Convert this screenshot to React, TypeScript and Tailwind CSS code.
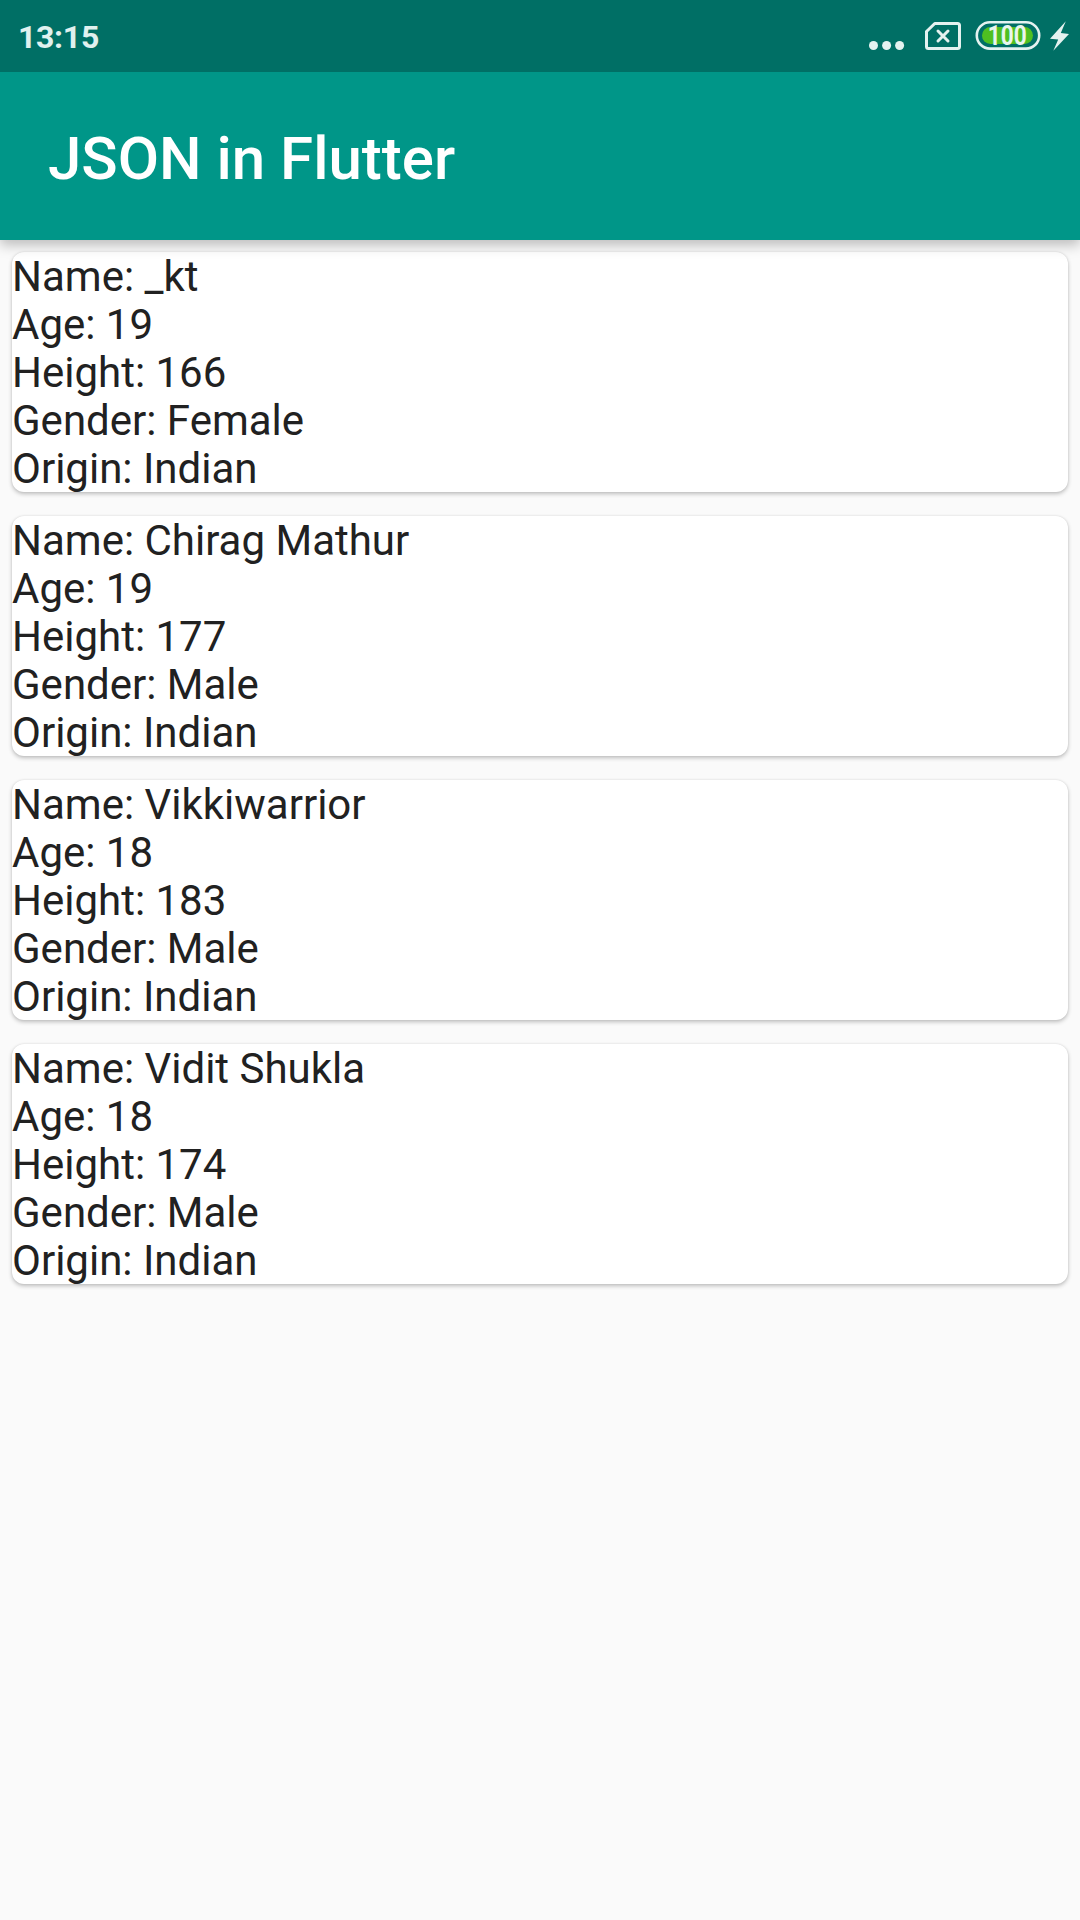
const people = [
  { name: '_kt', age: 19, height: 166, gender: 'Female' },
  { name: 'Chirag Mathur', age: 19, height: 177, gender: 'Male' },
  { name: 'Vikkiwarrior', age: 18, height: 183, gender: 'Male' },
  { name: 'Vidit Shukla', age: 18, height: 174, gender: 'Male' },
];

function StatusIcons() {
  return (
    <div className="flex h-full items-center">
      <svg className="mr-5" width="36" height="72" viewBox="0 0 36 72" fill="#e4f2f0">
        <circle cx="4.5" cy="45.5" r="4.5" />
        <circle cx="17.6" cy="45.5" r="4.5" />
        <circle cx="30.6" cy="45.5" r="4.5" />
      </svg>
      <svg className="mr-3.5" width="36" height="72" viewBox="0 0 36 72" fill="none" stroke="#e4f2f0" strokeWidth="3" strokeLinecap="round" strokeLinejoin="round">
        <path d="M9.8 23.5H32.5Q34.5 23.5 34.5 25.5V46.5Q34.5 48.5 32.5 48.5H3.5Q1.5 48.5 1.5 46.5V31.5Z" />
        <path d="M13 31 23 41M23 31 13 41" />
      </svg>
      <svg className="mr-2" width="66" height="72" viewBox="0 0 66 72" fill="none">
        <rect x="1.8" y="22.2" width="62.4" height="26.4" rx="13.2" stroke="#e4f2f0" strokeWidth="2.6" />
        <rect x="7" y="27" width="51" height="17" rx="8.5" fill="#4fbf21" />
        <text transform="translate(32.2 45) scale(0.84 1)" textAnchor="middle" fill="#e8f5ee" fontFamily="Roboto, sans-serif" fontWeight="700" fontSize="27">100</text>
      </svg>
      <svg width="20" height="72" viewBox="0 0 20 72" fill="#e4f2f0">
        <path d="M16.8 21.2 1 38.7 9.2 39.5 4.3 50.7 20 34 11.8 33Z" />
      </svg>
    </div>
  );
}

export default function App() {
  return (
    <div className="flex h-[1920px] w-[1080px] flex-col overflow-hidden bg-[#fafafa] font-['Roboto',sans-serif]">
      <header className="relative z-10 bg-[#009688] shadow-[0_5px_12px_rgba(0,0,0,0.25)]">
        <div className="flex h-[72px] items-center justify-between bg-[#006f65] pl-[18px] pr-[11px]">
          <span className="pt-0.5 text-[32px] font-bold leading-none tracking-[-0.3px] text-[#e0f1ef]">13:15</span>
          <StatusIcons />
        </div>
        <div className="flex h-[168px] items-center pl-12 pt-1.5">
          <h1 className="text-[60px] font-medium leading-none text-white">JSON in Flutter</h1>
        </div>
      </header>
      <main className="flex flex-col gap-6 px-3 pt-3">
        {people.map((p) => (
          <section key={p.name} className="h-60 rounded-xl bg-white pt-px text-[42px] leading-[48px] text-[#212121] shadow-[0_2px_4px_rgba(0,0,0,0.24),0_0_2px_rgba(0,0,0,0.1)]">
            <p>Name: {p.name}</p>
            <p>Age: {p.age}</p>
            <p>Height: {p.height}</p>
            <p>Gender: {p.gender}</p>
            <p>Origin: Indian</p>
          </section>
        ))}
      </main>
    </div>
  );
}
